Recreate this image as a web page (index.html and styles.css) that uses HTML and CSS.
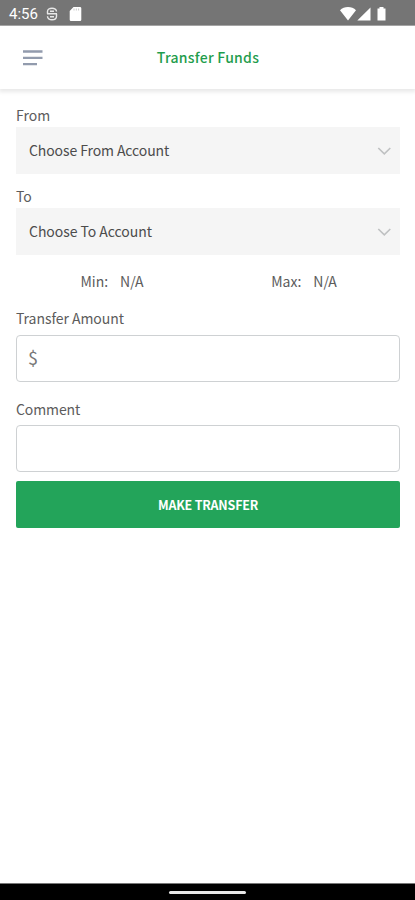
FILE: index.html
```html
<!DOCTYPE html>
<html lang="en">
<head>
<meta charset="utf-8">
<meta name="viewport" content="width=device-width, initial-scale=1">
<title>Transfer Funds</title>
<link rel="stylesheet" href="styles.css">
</head>
<body>
<div class="screen">
  <div class="status">
    <span class="clock">4:56</span>
    <svg class="status-app" width="12" height="14" viewBox="0 0 12 14" fill="none" stroke="#e8e8e8" stroke-width="1.400"><path d="M1.500 6.700V4.500C1.500 2.300 3.500 1.200 6 1.200s4.500 1.100 4.500 3.300M1 6.700h10M10.500 6.700v2.600c0 2.300-2 3.500-4.500 3.500s-4.500-1.200-4.500-3.500M4 4.200h4M4 9.700h4"/></svg>
    <svg class="status-card" width="13" height="14" viewBox="0 0 13 14"><path fill="#fff" d="M4.500 0H11a1.300 1.300 0 0 1 1.300 1.300v11.400A1.300 1.300 0 0 1 11 14H2a1.300 1.300 0 0 1-1.300-1.300V4z"/><path d="M5 1.500v2M7.300 1.500v2M9.600 1.500v2" stroke="#bbb" stroke-width=".8"/></svg>
    <svg class="status-signals" width="48" height="15" viewBox="0 0 48 15" fill="#fff"><path d="M1 4.200C3 2.200 6 1 9 1s6 1.200 8 3.200L9 14.500zM31.500 1.500v13H18.300zM38.500 2.500h2V1h4v1.500h2V14.500h-8z"/></svg>
  </div>
  <header class="header">
    <svg class="menu" width="20" height="17" viewBox="0 0 20 17" stroke="#929bad" stroke-width="2.300"><path d="M0 2.500h19.500M0 8.800h19.500M0 15.200h14"/></svg>
    <h1 class="title">Transfer Funds</h1>
  </header>
  <main class="form">
    <div class="label">From</div>
    <div class="select"><span class="choice-from">Choose From Account</span><svg width="14" height="8" viewBox="0 0 14 8" fill="none" stroke="#bfc1c2" stroke-width="1.600"><path d="M1.300 1l6 5.800L13.300 1"/></svg></div>
    <div class="label label-to">To</div>
    <div class="select"><span class="choice-to">Choose To Account</span><svg width="14" height="8" viewBox="0 0 14 8" fill="none" stroke="#bfc1c2" stroke-width="1.600"><path d="M1.300 1l6 5.800L13.300 1"/></svg></div>
    <div class="limits">
      <div class="limit"><span>Min:</span><span>N/A</span></div>
      <div class="limit"><span>Max:</span><span>N/A</span></div>
    </div>
    <div class="label label-amount">Transfer Amount</div>
    <div class="field">$</div>
    <div class="label label-comment">Comment</div>
    <div class="field">&nbsp;</div>
    <div class="submit">MAKE TRANSFER</div>
  </main>
  <div class="navbar"><div class="handle"></div></div>
</div>
</body>
</html>
```
FILE: styles.css
```css
* { box-sizing: border-box; }
body {
  margin: 0;
  background: #fff;
  color: #5c5c5c;
  font: 14px/20px "Noto Sans CJK SC", "Noto Sans", sans-serif;
}
.screen { width: 415px; height: 900px; display: flex; flex-direction: column; overflow: hidden; }
.status {
  height: 26px;
  flex: none;
  display: flex;
  align-items: center;
  padding: 2px 28px 0 9px;
  background: #757575;
  border-bottom: 1px solid #a8a8a8;
}
.clock { width: 37px; font: 15px/20px Roboto, sans-serif; color: #fff; }
.status-card { margin-left: 11px; }
.status-signals { margin-left: auto; }
.header {
  height: 63px;
  flex: none;
  display: flex;
  align-items: center;
  padding: 0 23px 0 23px;
  box-shadow: 0 2px 4px 1px rgba(0, 0, 0, .09);
}
.title {
  flex: 1;
  margin: 0 19px 0 0;
  padding-bottom: 2px;
  text-align: center;
  font-size: 14px;
  line-height: 20px;
  font-weight: 500;
  letter-spacing: .25px;
  color: #1f9d4d;
}
.form { flex: 1; padding: 16px 15px 0 16px; }
.label { height: 22px; }
.select {
  height: 47px;
  display: flex;
  align-items: center;
  justify-content: space-between;
  padding: 0 9px 0 13px;
  background: #f5f5f5;
  color: #4c4c4c;
}
.select span { padding-bottom: 2px; }
.choice-from { letter-spacing: -.1px; }
.choice-to { letter-spacing: -.05px; }
.label-to { margin-top: 12px; }
.limits { display: flex; height: 20px; margin-top: 16px; }
.limit { flex: 1; display: flex; justify-content: center; gap: 12px; }
.label-amount { margin-top: 17px; height: 27px; letter-spacing: -.05px; }
.field {
  height: 47px;
  border: 1px solid #ced1d3;
  border-radius: 4px;
  padding: 0 11px;
  font-size: 18px;
  line-height: 42px;
  color: #777;
}
.label-comment { margin-top: 17px; height: 26px; letter-spacing: -.1px; }
.submit {
  height: 47px;
  margin-top: 9px;
  border-radius: 2px;
  background: #23a45a;
  color: #fff;
  text-align: center;
  font-size: 12.5px;
  line-height: 47px;
  font-weight: 700;
  letter-spacing: -.2px;
}
.navbar {
  height: 17px;
  flex: none;
  display: flex;
  align-items: center;
  justify-content: center;
  background: #000;
  border-top: 1px solid #777;
}
.handle { width: 77px; height: 3px; border-radius: 2px; background: #e8e8e8; }
```
